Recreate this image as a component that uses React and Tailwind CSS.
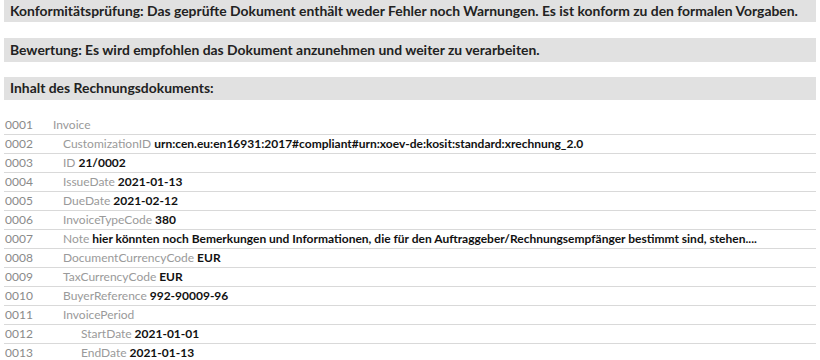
import React from 'react';

const font = { fontFamily: 'Lato, "Open Sans", sans-serif' };

// level: 0 = root, 1 = child, 2 = grandchild
const rows = [
  { nr: '0001', level: 0, name: 'Invoice' },
  { nr: '0002', level: 1, name: 'CustomizationID', value: 'urn:cen.eu:en16931:2017#compliant#urn:xoev-de:kosit:standard:xrechnung_2.0' },
  { nr: '0003', level: 1, name: 'ID', value: '21/0002' },
  { nr: '0004', level: 1, name: 'IssueDate', value: '2021-01-13' },
  { nr: '0005', level: 1, name: 'DueDate', value: '2021-02-12' },
  { nr: '0006', level: 1, name: 'InvoiceTypeCode', value: '380' },
  { nr: '0007', level: 1, name: 'Note', value: 'hier könnten noch Bemerkungen und Informationen, die für den Auftraggeber/Rechnungsempfänger bestimmt sind, stehen....' },
  { nr: '0008', level: 1, name: 'DocumentCurrencyCode', value: 'EUR' },
  { nr: '0009', level: 1, name: 'TaxCurrencyCode', value: 'EUR' },
  { nr: '0010', level: 1, name: 'BuyerReference', value: '992-90009-96' },
  { nr: '0011', level: 1, name: 'InvoicePeriod' },
  { nr: '0012', level: 2, name: 'StartDate', value: '2021-01-01' },
  { nr: '0013', level: 2, name: 'EndDate', value: '2021-01-13' },
];

const indent = ['pl-0', 'pl-[10px]', 'pl-[28px]'];

function Bar({ children, className = '' }) {
  return (
    <div className={`bg-[#e1e1e1] px-[6px] flex items-center text-[13.9px] font-bold text-[#222] ${className}`}>
      {children}
    </div>
  );
}

export default function App() {
  return (
    <div className="bg-white w-[820px] h-[360px] overflow-hidden px-[4px]" style={font}>
      <Bar className="h-[22px]">
        Konformitätsprüfung: Das geprüfte Dokument enthält weder Fehler noch Warnungen. Es ist konform zu den formalen Vorgaben.
      </Bar>
      <Bar className="h-[24px] mt-[16px]">
        Bewertung: Es wird empfohlen das Dokument anzunehmen und weiter zu verarbeiten.
      </Bar>
      <Bar className="h-[23px] mt-[15px]">Inhalt des Rechnungsdokuments:</Bar>

      <div className="mt-[16px]">
        {rows.map(r => (
          <div key={r.nr} className="h-[19px] flex items-center border-b border-[#d9d9d9] text-[12px]">
            <span className="w-[49px] pl-[1px] text-[#8a8a8a]">{r.nr}</span>
            <span className={indent[r.level]}>
              <span className="text-[#9a9a9a]">{r.name}</span>
              {r.value && <span className="font-bold text-[#111]"> {r.value}</span>}
            </span>
          </div>
        ))}
      </div>
    </div>
  );
}
